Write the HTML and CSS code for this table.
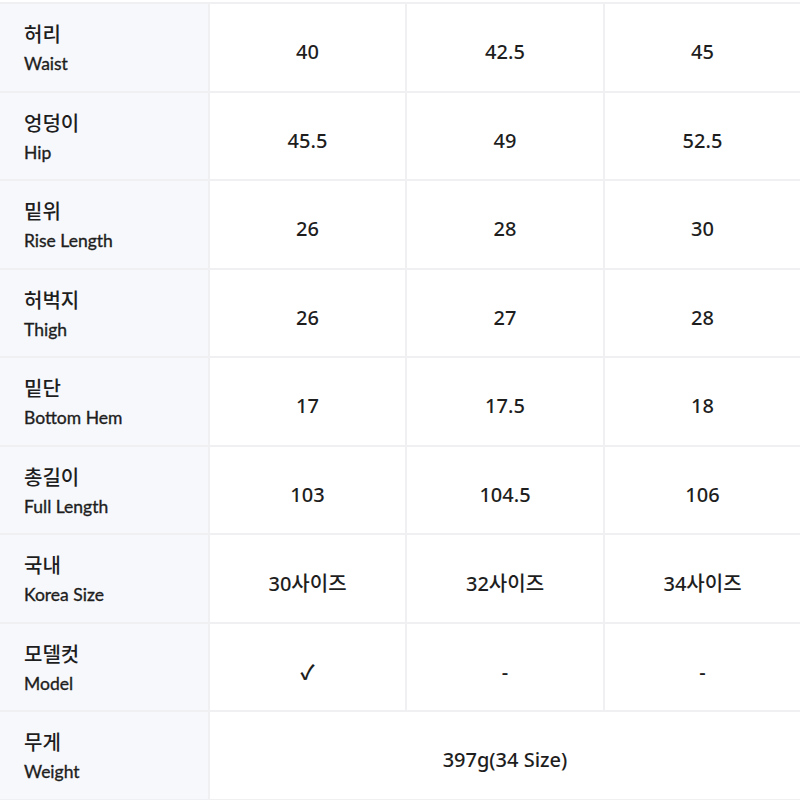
FILE: index.html
```
<!DOCTYPE html>
<html lang="ko">
<head>
<meta charset="utf-8">
<link rel="stylesheet" href="styles.css">
</head>
<body>
<div class="table">
  <div class="row"><div class="label"><span class="ko">허리</span><span class="en">Waist</span></div><div class="cell">40</div><div class="cell">42.5</div><div class="cell">45</div></div>
  <div class="row"><div class="label"><span class="ko">엉덩이</span><span class="en">Hip</span></div><div class="cell">45.5</div><div class="cell">49</div><div class="cell">52.5</div></div>
  <div class="row"><div class="label"><span class="ko">밑위</span><span class="en">Rise Length</span></div><div class="cell">26</div><div class="cell">28</div><div class="cell">30</div></div>
  <div class="row"><div class="label"><span class="ko">허벅지</span><span class="en">Thigh</span></div><div class="cell">26</div><div class="cell">27</div><div class="cell">28</div></div>
  <div class="row"><div class="label"><span class="ko">밑단</span><span class="en">Bottom Hem</span></div><div class="cell">17</div><div class="cell">17.5</div><div class="cell">18</div></div>
  <div class="row"><div class="label"><span class="ko">총길이</span><span class="en">Full Length</span></div><div class="cell">103</div><div class="cell">104.5</div><div class="cell">106</div></div>
  <div class="row"><div class="label"><span class="ko">국내</span><span class="en">Korea Size</span></div><div class="cell">30사이즈</div><div class="cell">32사이즈</div><div class="cell">34사이즈</div></div>
  <div class="row"><div class="label"><span class="ko">모델컷</span><span class="en">Model</span></div><div class="cell check">✓</div><div class="cell">-</div><div class="cell">-</div></div>
  <div class="row"><div class="label"><span class="ko">무게</span><span class="en">Weight</span></div><div class="cell span">397g(34 Size)</div></div>
</div>
</body>
</html>
```
FILE: styles.css
```
html, body {
  margin: 0;
  padding: 0;
  background: #ffffff;
}
body {
  font-family: "Noto Sans", "Noto Sans CJK KR", sans-serif;
  color: #222222;
  padding-top: 2px;
}
.table {
  display: flex;
  flex-direction: column;
  border-top: 2px solid #f0f0f2;
}
.row {
  display: grid;
  grid-template-columns: 210px 197px 198px 1fr;
  height: 88.5px;
  box-sizing: border-box;
  border-bottom: 2px solid #f0f0f2;
}
.label {
  background: #f7f8fb;
  border-right: 2px solid #f0f0f2;
  display: flex;
  flex-direction: column;
  justify-content: center;
  padding-left: 24px;
  padding-top: 2px;
  gap: 5px;
}
.ko {
  font-family: "Noto Sans CJK KR", sans-serif;
  font-size: 20px;
  line-height: 27px;
  font-weight: 500;
  color: #1e1e1e;
}
.en {
  font-family: Lato, "Noto Sans", sans-serif;
  font-size: 17.5px;
  line-height: 24px;
  font-weight: 400;
  -webkit-text-stroke: 0.35px #1e1e1e;
  color: #1e1e1e;
}
.cell {
  display: flex;
  align-items: center;
  justify-content: center;
  padding-top: 9px;
  font-size: 20px;
  font-weight: 500;
  border-right: 2px solid #f0f0f2;
  font-family: "Noto Sans", "Noto Sans CJK KR", sans-serif;
  color: #1e1e1e;
}
.cell:last-child {
  border-right: none;
}
.cell.check {
  font-weight: 700;
}
.cell.span {
  grid-column: 2 / 5;
}
```
